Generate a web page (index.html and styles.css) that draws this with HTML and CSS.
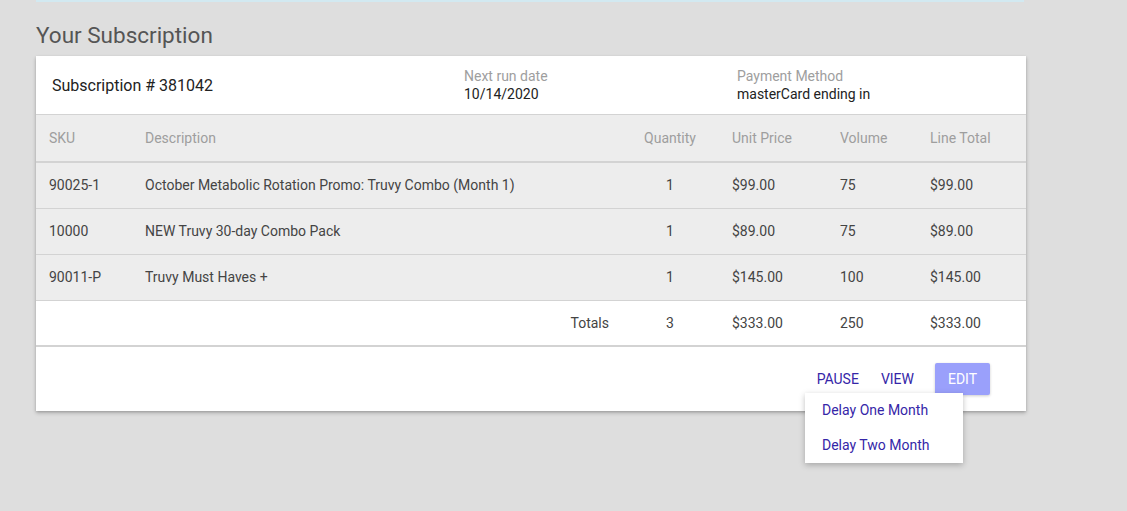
FILE: index.html
```html
<!DOCTYPE html>
<html>
<head>
<meta charset="utf-8">
<link rel="stylesheet" href="styles.css">
</head>
<body>
<div class="page">
  <div class="strip"></div>
  <h2 class="title">Your Subscription</h2>
  <div class="card">
    <div class="card-head">
      <div class="sub-no">Subscription # 381042</div>
      <div class="meta">
        <div class="meta-label">Next run date</div>
        <div class="meta-value">10/14/2020</div>
      </div>
      <div class="meta">
        <div class="meta-label">Payment Method</div>
        <div class="meta-value">masterCard ending in</div>
      </div>
    </div>
    <table class="items">
      <colgroup>
        <col class="c-sku"><col class="c-desc"><col class="c-qty"><col class="c-price"><col class="c-vol"><col class="c-total">
      </colgroup>
      <thead>
        <tr><th>SKU</th><th>Description</th><th class="qty">Quantity</th><th>Unit Price</th><th>Volume</th><th>Line Total</th></tr>
      </thead>
      <tbody>
        <tr><td>90025-1</td><td>October Metabolic Rotation Promo: Truvy Combo (Month 1)</td><td class="qty">1</td><td>$99.00</td><td>75</td><td>$99.00</td></tr>
        <tr><td>10000</td><td>NEW Truvy 30-day Combo Pack</td><td class="qty">1</td><td>$89.00</td><td>75</td><td>$89.00</td></tr>
        <tr><td>90011-P</td><td>Truvy Must Haves +</td><td class="qty">1</td><td>$145.00</td><td>100</td><td>$145.00</td></tr>
        <tr class="totals"><td></td><td class="tlabel">Totals</td><td class="qty">3</td><td>$333.00</td><td>250</td><td>$333.00</td></tr>
      </tbody>
    </table>
    <div class="card-foot">
      <button class="btn text">PAUSE</button>
      <button class="btn text">VIEW</button>
      <button class="btn raised">EDIT</button>
      <div class="menu">
        <div class="menu-item">Delay One Month</div>
        <div class="menu-item">Delay Two Month</div>
      </div>
    </div>
  </div>
</div>
</body>
</html>
```
FILE: styles.css
```css
* { box-sizing: border-box; }
html, body { margin: 0; padding: 0; }
body {
  background: #dedede;
  font-family: Roboto, "Noto Sans", sans-serif;
  width: 1127px;
  height: 511px;
  overflow: hidden;
}
.page {
  padding-left: 36px;
  width: 1026px;
}
.strip {
  height: 2px;
  width: 988px;
  background: #d2e9f1;
}
.title {
  margin: 20px 0 8px 0;
  font-size: 22.5px;
  line-height: 26px;
  font-weight: 400;
  color: #555555;
}
.card {
  background: #ffffff;
  width: 990px;
  box-shadow: 0 2px 4px rgba(0,0,0,0.22), 0 1px 2px rgba(0,0,0,0.12);
}
.card-head {
  height: 59px;
  display: grid;
  grid-template-columns: 412px 273px 1fr;
  align-items: center;
  padding-left: 16px;
  border-bottom: 1px solid #d3d3d3;
}
.sub-no {
  font-size: 16px;
  color: #222222;
}
.meta-label {
  font-size: 14px;
  line-height: 18px;
  color: #9e9e9e;
}
.meta-value {
  font-size: 14px;
  line-height: 19px;
  color: #222222;
}
.items {
  width: 990px;
  border-collapse: collapse;
  table-layout: fixed;
}
.c-sku { width: 97px; }
.c-desc { width: 487px; }
.c-qty { width: 100px; }
.c-price { width: 108px; }
.c-vol { width: 90px; }
.c-total { width: 108px; }
.items th, .items td {
  padding: 0 12px;
  text-align: left;
  font-size: 14px;
  font-weight: 400;
  white-space: nowrap;
}
.items th:first-child, .items td:first-child { padding-left: 13px; }
.items th {
  height: 47px;
  background: #ededed;
  color: #9e9e9e;
  border-bottom: 2px solid #d3d3d3;
}
.items td {
  height: 46px;
  background: #ededed;
  color: #444444;
  border-bottom: 1px solid #d3d3d3;
}
.items .qty { text-align: center; }
.items .totals td {
  background: #ffffff;
  height: 46px;
  border-bottom: 2px solid #d3d3d3;
}
.items .tlabel { text-align: right; padding-right: 11px; }
.card-foot {
  position: relative;
  height: 64px;
  display: flex;
  justify-content: flex-end;
  align-items: flex-start;
  padding: 16px 36px 0 0;
}
.btn {
  height: 32px;
  border: none;
  font-family: Roboto, "Noto Sans", sans-serif;
  font-size: 14px;
  padding: 0 8px;
  cursor: pointer;
}
.btn.text {
  background: transparent;
  color: #3526a8;
  margin-right: 6px;
}
.btn.text + .btn.text { margin-right: 13px; }
.btn.raised {
  width: 55px;
  background: #9aa0fb;
  color: #ffffff;
  border-radius: 2px;
  box-shadow: 0 1px 3px rgba(0,0,0,0.2);
}
.menu {
  position: absolute;
  left: 769px;
  top: 46px;
  width: 158px;
  height: 70px;
  background: #ffffff;
  box-shadow: 0 2px 6px rgba(0,0,0,0.25);
  z-index: 2;
}
.menu-item {
  height: 35px;
  line-height: 35px;
  padding-left: 17px;
  font-size: 14px;
  color: #3526a8;
}
```
